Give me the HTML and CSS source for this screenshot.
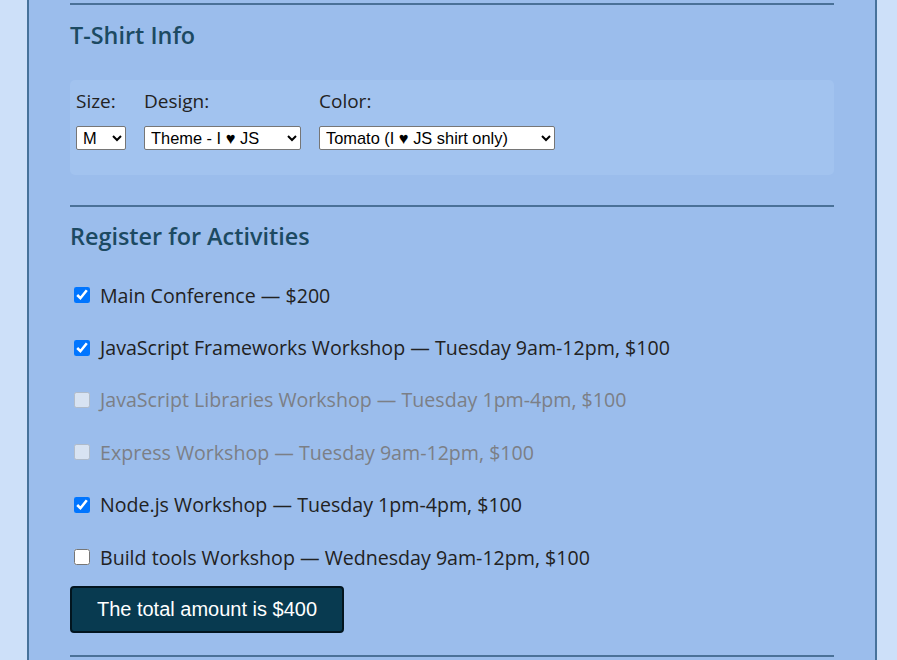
FILE: index.html
```html
<!DOCTYPE html>
<html lang="en">
<head>
<meta charset="utf-8">
<title>Register</title>
<link rel="stylesheet" href="styles.css">
</head>
<body>
<div class="container">
  <form class="form">
    <hr class="rule">
    <h2 class="section-title">T-Shirt Info</h2>
    <div class="shirt-box">
      <div class="field">
        <label class="field-label" for="size">Size:</label>
        <select id="size" class="select select-size"><option>M</option></select>
      </div>
      <div class="field">
        <label class="field-label" for="design">Design:</label>
        <select id="design" class="select select-design"><option>Theme - I ♥ JS</option></select>
      </div>
      <div class="field">
        <label class="field-label" for="color">Color:</label>
        <select id="color" class="select select-color"><option>Tomato (I ♥ JS shirt only)</option></select>
      </div>
    </div>
    <hr class="rule rule-2">
    <h2 class="section-title title-2">Register for Activities</h2>
    <div class="activities">
      <label class="activity"><input type="checkbox" class="check" checked>Main Conference — $200</label>
      <label class="activity"><input type="checkbox" class="check" checked>JavaScript Frameworks Workshop — Tuesday 9am-12pm, $100</label>
      <label class="activity disabled"><input type="checkbox" class="check" disabled>JavaScript Libraries Workshop — Tuesday 1pm-4pm, $100</label>
      <label class="activity disabled"><input type="checkbox" class="check" disabled>Express Workshop — Tuesday 9am-12pm, $100</label>
      <label class="activity"><input type="checkbox" class="check" checked>Node.js Workshop — Tuesday 1pm-4pm, $100</label>
      <label class="activity"><input type="checkbox" class="check">Build tools Workshop — Wednesday 9am-12pm, $100</label>
    </div>
    <div class="total">The total amount is $400</div>
    <hr class="rule rule-3">
  </form>
</div>
</body>
</html>
```
FILE: styles.css
```css
html, body {
  margin: 0;
  padding: 0;
  background: #cde0f9;
  height: 660px;
  overflow: hidden;
}
.container {
  margin-left: 27px;
  width: 846px;
  height: 700px;
  background: #9bbdec;
  border-left: 2px solid #47729b;
  border-right: 2px solid #47729b;
  font-family: "Open Sans", sans-serif;
  color: #222;
}
.form {
  padding: 3px 0 0 41px;
}
.rule {
  margin: 0;
  border: 0;
  height: 2px;
  width: 764px;
  background: #4a7198;
}
.section-title {
  margin: 15px 0 0;
  font-size: 23.4px;
  line-height: 30px;
  font-weight: 600;
  color: #1c4a62;
}
.shirt-box {
  margin-top: 30px;
  width: 764px;
  box-sizing: border-box;
  background: #a2c3ef;
  border-radius: 5px;
  padding: 9px 6px 25px;
  display: flex;
  gap: 18px;
}
.field {
  display: flex;
  flex-direction: column;
}
.field-label {
  font-size: 19px;
  line-height: 24px;
  margin-bottom: 13px;
}
.select {
  height: 24px;
  font-family: "Liberation Sans", Arial, sans-serif;
  font-size: 16.4px;
  background: #fff;
  color: #000;
  border: 1px solid #767676;
  border-radius: 2px;
  padding: 0 2px;
  margin: 0;
}
.select-size { width: 50px; }
.select-design { width: 157px; }
.select-color { width: 236px; }
.rule-2 { margin-top: 30px; }
.title-2 { margin-top: 14px; }
.activities {
  margin-top: 18px;
  display: flex;
  flex-direction: column;
}
.activity {
  height: 52.4px;
  display: flex;
  align-items: center;
  font-size: 19.6px;
  color: #222;
}
.activity.disabled {
  color: #7b7f86;
}
.check {
  width: 16px;
  height: 16px;
  margin: 0 10px 0 4px;
}
.total {
  margin-top: 3px;
  width: 274px;
  height: 47px;
  box-sizing: border-box;
  border: 2px solid #02151f;
  border-radius: 4px;
  background: #083a50;
  color: #fff;
  font-family: "Liberation Sans", Arial, sans-serif;
  font-size: 20px;
  display: flex;
  align-items: center;
  justify-content: center;
}
.rule-3 { margin-top: 22px; }
```
